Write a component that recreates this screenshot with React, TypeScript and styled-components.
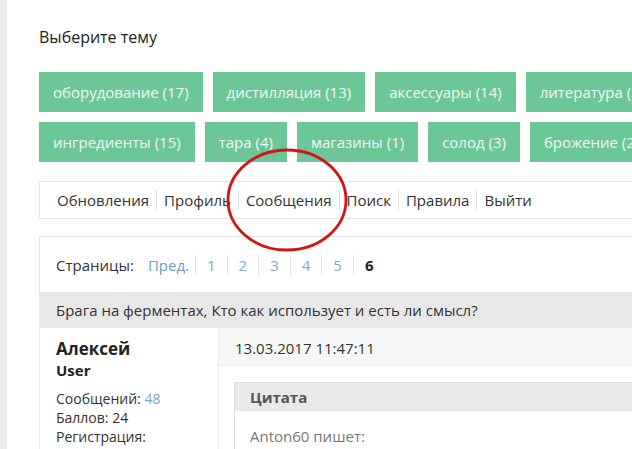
import React from "react";
import styled, { createGlobalStyle } from "styled-components";

const Global = createGlobalStyle`
  html, body { margin: 0; padding: 0; background: #fff; overflow: hidden; }
  body { font-family: "Open Sans", "Noto Sans", sans-serif; color: #333; }
  * { box-sizing: border-box; }
`;

const Page = styled.div`
  display: flex;
  width: 760px;
  min-height: 449px;
  position: relative;
`;

const Strip = styled.div`
  width: 7px;
  flex: none;
  background: #ececec;
`;

const Main = styled.div`
  flex: 1;
  padding: 26px 0 0 32px;
  display: flex;
  flex-direction: column;
`;

const Heading = styled.h2`
  margin: 0;
  font-size: 16px;
  line-height: 22px;
  font-weight: 400;
  color: #222;
`;

const Tags = styled.div`
  margin-top: 24px;
  display: flex;
  flex-direction: column;
  gap: 10px;
`;

const TagRow = styled.div`
  display: flex;
  gap: 10px;
  white-space: nowrap;
`;

const Tag = styled.a`
  display: block;
  height: 40px;
  line-height: 40px;
  padding: 0 14px;
  background: #6cc797;
  color: #f1f9f4;
  font-size: 15px;
  text-decoration: none;
  flex: none;
`;

const Nav = styled.div`
  margin-top: 19px;
  height: 38px;
  border: 1px solid #e4e4e4;
  display: flex;
  align-items: center;
  padding-left: 10px;
`;

const NavItem = styled.a<{ $first?: boolean }>`
  display: block;
  padding: 0 7px;
  font-size: 15px;
  line-height: 20px;
  color: #333;
  text-decoration: none;
  border-left: ${(p) => (p.$first ? "none" : "1px solid #e0e0e0")};
`;

const Pager = styled.div`
  margin-top: 17px;
  height: 56px;
  border: 1px solid #e4e4e4;
  border-bottom: none;
  display: flex;
  align-items: center;
  padding-left: 16px;
`;

const PagerLabel = styled.span`
  font-size: 15px;
  line-height: 20px;
  color: #333;
  margin-right: 4px;
`;

const PageLink = styled.a<{ $first?: boolean; $current?: boolean }>`
  display: block;
  padding: 0 ${(p) => (p.$first ? "6px" : "11px")} 0 ${(p) => (p.$first ? "10px" : "11px")};
  font-size: 15px;
  line-height: 20px;
  text-decoration: none;
  color: ${(p) => (p.$current ? "#222" : p.$first ? "#6c9ec9" : "#85a9c6")};
  font-weight: ${(p) => (p.$current ? 700 : 400)};
  border-left: ${(p) => (p.$first ? "none" : "1px solid #e3e3e3")};
`;

const TopicBar = styled.div`
  height: 36px;
  line-height: 36px;
  background: #e8e8e8;
  padding-left: 17px;
  font-size: 15px;
  color: #333;
  white-space: nowrap;
`;

const Post = styled.div`
  display: grid;
  grid-template-columns: 179px 1fr;
  flex: 1;
`;

const Author = styled.div`
  padding: 10px 16px 0 16px;
  border-left: 1px solid #ececec;
`;

const AuthorName = styled.div`
  font-size: 17px;
  line-height: 22px;
  font-weight: 700;
  color: #222;
`;

const AuthorRole = styled.div`
  font-size: 15px;
  line-height: 20px;
  font-weight: 700;
  color: #222;
`;

const AuthorInfo = styled.div`
  margin-top: 9px;
  font-size: 14px;
  line-height: 19px;
  color: #333;
`;

const InfoLink = styled.a`
  color: #7ea7c9;
  text-decoration: none;
`;

const Body = styled.div`
  border-left: 1px solid #ececec;
  display: flex;
  flex-direction: column;
`;

const PostHeader = styled.div`
  height: 38px;
  background: #f7f7f7;
  border-bottom: 1px solid #f0f0f0;
  padding: 0 16px;
  font-size: 15px;
  line-height: 40px;
  color: #333;
`;

const Content = styled.div`
  padding: 16px 15px 0 15px;
`;

const Quote = styled.div`
  border: 1px solid #dedede;
`;

const QuoteHead = styled.div`
  height: 28px;
  line-height: 28px;
  background: #e9e9e9;
  padding-left: 15px;
  font-size: 15px;
  font-weight: 700;
  color: #555;
`;

const QuoteBody = styled.div`
  padding: 15px 15px 20px;
  font-size: 15px;
  line-height: 20px;
  color: #777;
`;

const Circle = styled.svg`
  position: absolute;
  left: 224px;
  top: 147px;
  pointer-events: none;
`;

const row1 = ["оборудование (17)", "дистилляция (13)", "аксессуары (14)", "литература (3)"];
const row2 = ["ингредиенты (15)", "тара (4)", "магазины (1)", "солод (3)", "брожение (2)"];
const nav = ["Обновления", "Профиль", "Сообщения", "Поиск", "Правила", "Выйти"];

export default function App() {
  return (
    <>
      <Global />
      <Page>
        <Strip />
        <Main>
          <Heading>Выберите тему</Heading>
          <Tags>
            <TagRow>
              {row1.map((t) => (
                <Tag key={t}>{t}</Tag>
              ))}
            </TagRow>
            <TagRow>
              {row2.map((t) => (
                <Tag key={t}>{t}</Tag>
              ))}
            </TagRow>
          </Tags>
          <Nav>
            {nav.map((n, i) => (
              <NavItem key={n} $first={i === 0}>
                {n}
              </NavItem>
            ))}
          </Nav>
          <Pager>
            <PagerLabel>Страницы:</PagerLabel>
            <PageLink $first>Пред.</PageLink>
            {["1", "2", "3", "4", "5"].map((n) => (
              <PageLink key={n}>{n}</PageLink>
            ))}
            <PageLink $current>6</PageLink>
          </Pager>
          <TopicBar>Брага на ферментах, Кто как использует и есть ли смысл?</TopicBar>
          <Post>
            <Author>
              <AuthorName>Алексей</AuthorName>
              <AuthorRole>User</AuthorRole>
              <AuthorInfo>
                Сообщений: <InfoLink>48</InfoLink>
                <br />
                Баллов: 24
                <br />
                Регистрация:
              </AuthorInfo>
            </Author>
            <Body>
              <PostHeader>13.03.2017 11:47:11</PostHeader>
              <Content>
                <Quote>
                  <QuoteHead>Цитата</QuoteHead>
                  <QuoteBody>Anton60 пишет:</QuoteBody>
                </Quote>
              </Content>
            </Body>
          </Post>
        </Main>
        <Circle width="126" height="108" viewBox="0 0 126 108">
          <ellipse cx="63" cy="53" rx="59" ry="50" fill="none" stroke="#d4121a" strokeWidth="2.8" />
        </Circle>
      </Page>
    </>
  );
}
